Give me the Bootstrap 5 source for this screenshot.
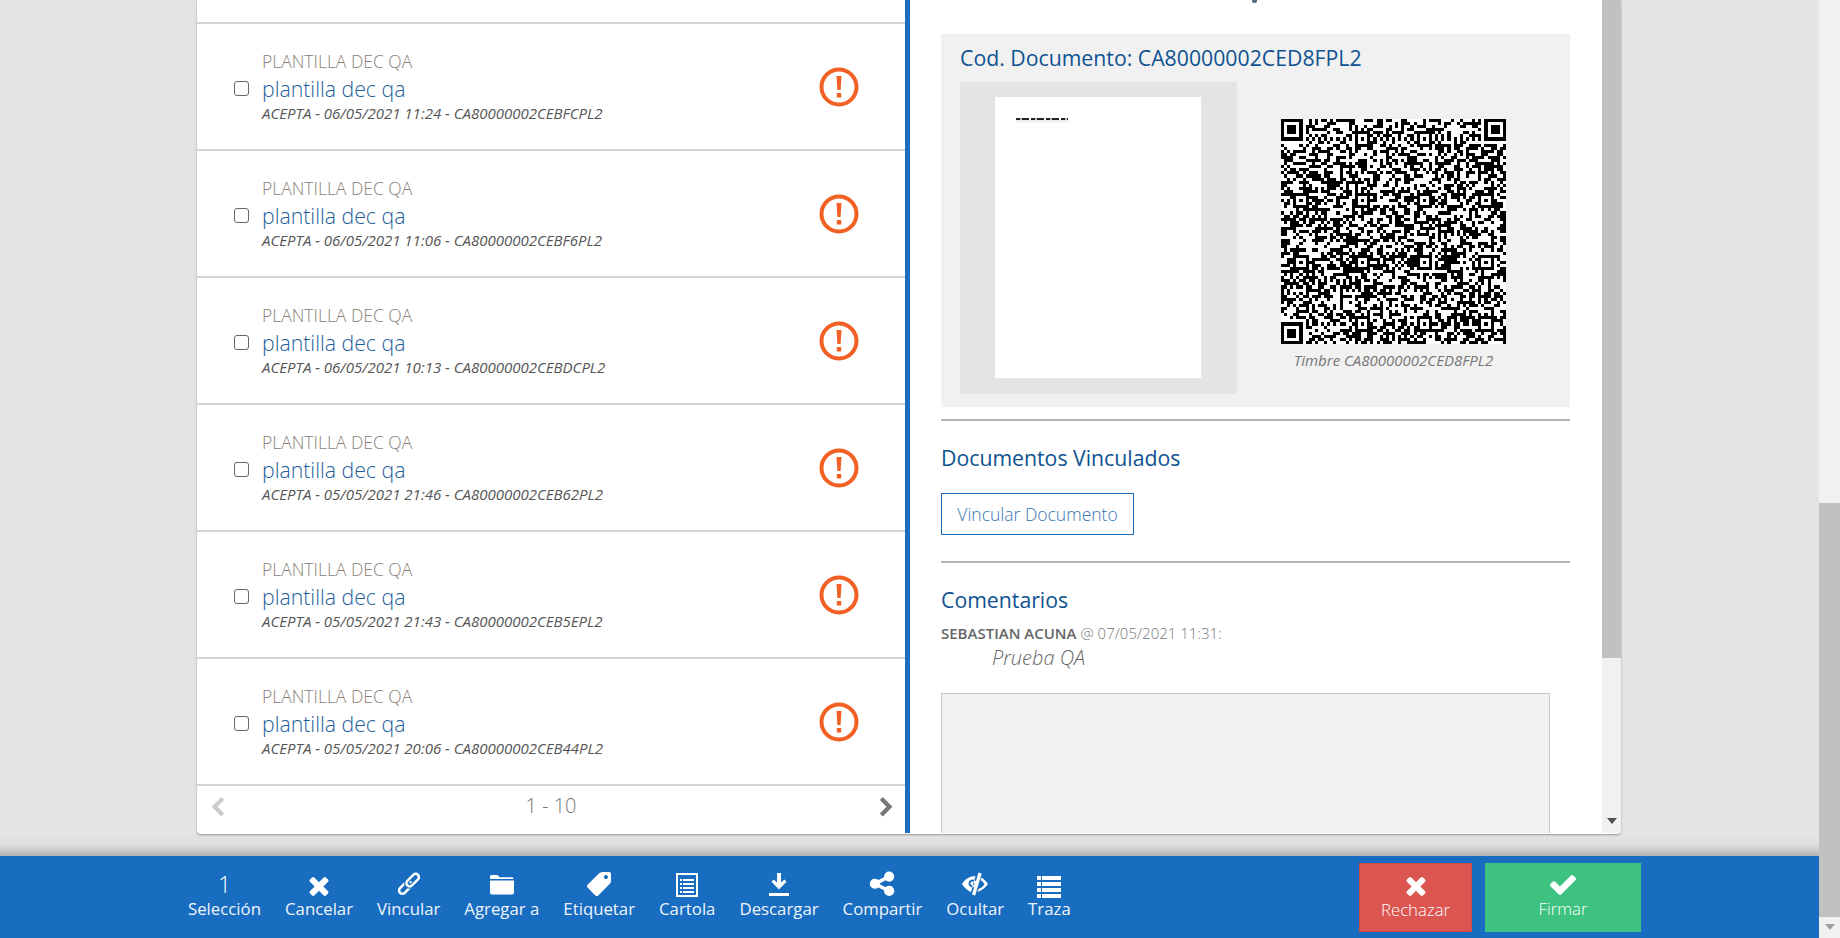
<!DOCTYPE html>
<html lang="es">
<head>
<meta charset="UTF-8" />
<title>Documentos</title>
<link href="https://cdn.jsdelivr.net/npm/bootstrap@5.3.2/dist/css/bootstrap.min.css" rel="stylesheet" />
<style>
  html, body { height: 938px; overflow: hidden; }
  body { font-family: "Open Sans", "Liberation Sans", sans-serif; background: #e4e4e4; color: #666; font-weight: 300; }
  svg { display: block; fill: currentColor; overflow: visible; }

  .page-main { width: 1819px; height: 938px; }
  .page-content { height: 856px; padding-left: 197px; background: linear-gradient(#e4e4e4 834px, #dedede 845px, #b4b4b4 856px); }
  .page-bar { width: 21px; height: 938px; background: #f1f1f1; }
  .page-thumb { height: 414px; margin-top: 503px; background: #c1c1c1; }
  .arrow-down { width: 0; height: 0; border-left: 5px solid transparent; border-right: 5px solid transparent; border-top: 6px solid #a0a0a0; }
  .page-bar .arrow-down { margin: 7px auto 0; }

  .doc-card { width: 1424px; height: 834px; background: #fff; box-shadow: 0 1px 2px rgba(0,0,0,.35); border-radius: 0 0 4px 4px; overflow: hidden; }
  .doc-list { width: 708px; }
  .list-stub { height: 24px; border-bottom: 2px solid #d4d4d4; }
  .doc-row { height: 127px; border-bottom: 2px solid #d4d4d4; padding-left: 37px; padding-right: 46px; }
  .doc-check { width: 15px; height: 15px; border: 1.5px solid #666; border-radius: 3px; margin-top: 4px; margin-right: 13px; flex: none; }
  .row-kicker { font-size: 17.5px; line-height: 25px; color: #8a8078; }
  .row-title { font-size: 21.25px; line-height: 30px; color: #1d6099; }
  .row-meta { font-size: 15px; line-height: 19px; margin-bottom: 2px; font-style: italic; font-weight: 400; color: #555; }
  .alert-mark { width: 40px; height: 40px; color: #f26024; }
  .pager { height: 47px; padding: 0 8px 8px 10px; color: #777; font-size: 20px; }
  .pager svg { width: 21px; height: 21px; margin-top: 3px; }
  .pager span { margin-right: 2px; }
  .pager-off { color: #ccc; }

  .doc-split { width: 5px; height: 833px; background: #1a6dc0; }
  .doc-detail { width: 692px; height: 833px; padding: 0 32px 0 31px; overflow: hidden; }
  .cut-heading { height: 34px; padding-left: 311px; }
  .cut-tail { width: 5px; height: 3px; background: #5a6a80; border-radius: 0 0 2px 2px; }
  .stamp-box { height: 373px; padding: 0 19px; background: #f1f1f1; }
  .sec-title { font-size: 21.25px; line-height: 28px; font-weight: 400; color: #0e5291; margin: 0; }
  .stamp-box .sec-title { padding-top: 10px; height: 48px; }
  .thumb-wrap { width: 277px; height: 312px; padding: 15px 35px; background: #e4e4e4; }
  .thumb-page { width: 206px; height: 281px; background: #fff; padding: 21px 21px; }
  .thumb-text { width: 52px; height: 2px; background: repeating-linear-gradient(90deg, #222 0 4px, #bbb 4px 6px, #222 6px 13px, #fff 13px 15px); box-shadow: 0 2px 2px #e6e6e6; filter: blur(.4px); }
  .qr-wrap { margin-left: 44px; padding-top: 37px; width: 225px; }
  .qr-wrap svg { width: 225px; height: 225px; }
  .qr-note { font-size: 15px; line-height: 20px; font-style: italic; font-weight: 400; color: #777; text-align: center; margin-top: 6px; white-space: nowrap; }
  .sec-rule { height: 2px; background: #b4b4b4; margin: 12px 0 0; opacity: 1; border: 0; }
  .title-linked { margin-top: 23px; }
  .link-doc { width: 193px; height: 42px; margin-top: 21px; border: 1.5px solid #1a6dc0; border-radius: 0; color: #3a74b0; font-size: 17.5px; font-weight: 300; padding: 0; line-height: 38px; background: #fff; }
  .rule-second { margin-top: 26px; }
  .title-comments { margin-top: 23px; }
  .comment-head { font-size: 15px; line-height: 20px; color: #777; margin-top: 9px; }
  .comment-head b { font-weight: 600; color: #666; }
  .comment-text { font-size: 20px; line-height: 28px; font-style: italic; padding-left: 51px; color: #666; margin-top: 1px; }
  .comment-box { width: 609px; height: 170px; background: #f1f1f1; border: 1px solid #c8c8c8; margin-top: 21px; }
  .detail-bar { width: 19px; height: 833px; background: #f1f1f1; }
  .detail-thumb { height: 658px; background: #c1c1c1; }
  .detail-bar .arrow-down { margin: 160px auto 0; border-top-color: #505050; }

  .action-bar { height: 82px; background: #196dc0; padding: 0 178px 0 176px; color: #fff; }
  .action-item { padding: 0 12px; text-align: center; height: 82px; font-size: 16.8px; font-weight: 400; line-height: 22px; color: #eef4fb; white-space: nowrap; }
  .action-icon { height: 42px; padding-top: 14px; display: flex; justify-content: center; color: #fff; }
  .action-icon svg { height: 26px; width: 26px; }
  .action-num { font-size: 23px; font-weight: 300; line-height: 28px; }
  .action-btn { height: 69px; margin-top: 7px; text-align: center; font-size: 16.8px; line-height: 22px; color: #fff; }
  .action-btn .action-icon { height: 35px; padding-top: 6px; }
  .btn-reject { width: 113px; background: #dc5550; border: 1px solid #cf4a46; }
  .btn-sign { width: 156px; background: #3dc37f; margin-left: 13px; }
</style>
</head>
<body class="d-flex">
  <div class="page-main">
    <div class="page-content">
      <div class="doc-card d-flex">
        <!-- lista de documentos -->
        <div class="doc-list d-flex flex-column">
          <div class="list-stub"></div>
          <div id="rows"></div>
          <div class="pager d-flex align-items-center justify-content-between">
            <svg class="pager-off" viewBox="0 0 1792 1792"><path d="M1427 301l-531 531 531 531q19 19 19 45t-19 45l-166 166q-19 19-45 19t-45-19l-742-742q-19-19-19-45t19-45l742-742q19-19 45-19t45 19l166 166q19 19 19 45t-19 45z"/></svg>
            <span>1 - 10</span>
            <svg viewBox="0 0 1792 1792"><path d="M1363 877l-742 742q-19 19-45 19t-45-19l-166-166q-19-19-19-45t19-45l531-531-531-531q-19-19-19-45t19-45l166-166q19-19 45-19t45 19l742 742q19 19 19 45t-19 45z"/></svg>
          </div>
        </div>
        <div class="doc-split"></div>
        <!-- detalle -->
        <div class="doc-detail">
          <div class="cut-heading"><div class="cut-tail"></div></div>
          <div class="stamp-box">
            <h5 class="sec-title">Cod. Documento: CA80000002CED8FPL2</h5>
            <div class="d-flex">
              <div class="thumb-wrap"><div class="thumb-page"><div class="thumb-text"></div></div></div>
              <div class="qr-wrap">
                <svg id="qr" viewBox="0 0 73 73" shape-rendering="crispEdges"></svg>
                <div class="qr-note">Timbre CA80000002CED8FPL2</div>
              </div>
            </div>
          </div>
          <hr class="sec-rule">
          <h5 class="sec-title title-linked">Documentos Vinculados</h5>
          <button class="btn link-doc d-block">Vincular Documento</button>
          <hr class="sec-rule rule-second">
          <h5 class="sec-title title-comments">Comentarios</h5>
          <div class="comment-head"><b>SEBASTIAN ACUNA</b> @ 07/05/2021 11:31:</div>
          <div class="comment-text">Prueba QA</div>
          <div class="comment-box"></div>
        </div>
        <div class="detail-bar">
          <div class="detail-thumb"></div>
          <div class="arrow-down"></div>
        </div>
      </div>
    </div>

    <div class="action-bar d-flex">
      <div class="action-item"><div class="action-icon"><span class="action-num">1</span></div>Selección</div>
      <div class="action-item"><div class="action-icon"><svg viewBox="84 -71 1625 1625"><path d="M1490 1322q0 40-28 68l-136 136q-28 28-68 28t-68-28l-294-294-294 294q-28 28-68 28t-68-28l-136-136q-28-28-28-68t28-68l294-294-294-294q-28-28-28-68t28-68l136-136q28-28 68-28t68 28l294 294 294-294q28-28 68-28t68 28l136 136q28 28 28 68t-28 68l-294 294 294 294q28 28 28 68z"/></svg></div>Cancelar</div>
      <div class="action-item"><div class="action-icon"><svg viewBox="0 0 26 26"><g transform="rotate(-45 13 13.800)" fill="none" stroke-width="2.500"><rect stroke="currentColor" x="0.300" y="10.500" width="15" height="6.600" rx="3.300"/><rect stroke="#196dc0" stroke-width="4.800" x="10.700" y="10.500" width="15" height="6.600" rx="3.300"/><rect stroke="currentColor" x="10.700" y="10.500" width="15" height="6.600" rx="3.300"/></g></svg></div>Vincular</div>
      <div class="action-item"><div class="action-icon"><svg viewBox="0 -2 26 26"><path d="M1 4.500q0-1.500 1.500-1.500h6l2 2.200h12q2 0 2 1.300v.5H1zM1 8.500h24v12q0 2-2 2H3q-2 0-2-2z"/></svg></div>Agregar a</div>
      <div class="action-item"><div class="action-icon"><svg viewBox="86 3 1640 1640"><path transform="matrix(-1 0 0 1 1792 0)" d="M576 448q0-53-37.500-90.500t-90.500-37.500-90.500 37.500-37.500 90.500 37.500 90.500 90.500 37.500 90.500-37.500 37.500-90.500zm1067 576q0 53-37 90l-491 492q-39 37-91 37-53 0-90-37l-715-716q-38-37-64.500-101t-26.500-117v-416q0-52 38-90t90-38h416q53 0 117 26.500t102 64.500l715 714q37 39 37 91z"/></svg></div>Etiquetar</div>
      <div class="action-item"><div class="action-icon"><svg viewBox="0 -2 26 26"><path fill-rule="evenodd" d="M2 1h22v24H2zM4 3v20h18V3z"/><path d="M6 7h2v2H6zM9 7h11v2H9zM6 11h2v2H6zM9 11h11v2H9zM6 15h2v2H6zM9 15h11v2H9zM6 19h2v2H6zM9 19h11v2H9z"/></svg></div>Cartola</div>
      <div class="action-item"><div class="action-icon"><svg viewBox="0 0 26 26"><path d="M11 3h4v9.500l3.500-3 2 2.200-7.500 7.800-7.500-7.800 2-2.200 3.500 3zM3 23h20v3H3z"/></svg></div>Descargar</div>
      <div class="action-item"><div class="action-icon"><svg viewBox="81 34 1630 1630"><path d="M1344 1024q133 0 226.500 93.500t93.500 226.500-93.500 226.500-226.500 93.500-226.500-93.500-93.500-226.500q0-12 2-34l-360-180q-92 86-218 86-133 0-226.500-93.500t-93.500-226.500 93.500-226.500 226.500-93.500q126 0 218 86l360-180q-2-22-2-34 0-133 93.500-226.500t226.500-93.500 226.500 93.500 93.500 226.500-93.500 226.500-226.500 93.500q-126 0-218-86l-360 180q2 22 2 34t-2 34l360 180q92-86 218-86z"/></svg></div>Compartir</div>
      <div class="action-item"><div class="action-icon"><svg viewBox="0 0 26 26"><path fill-rule="evenodd" d="M0 14C3 9 8 6 13.500 6L9 22C5.500 20.500 2.500 18 0 14zM10.500 9.500a4 4 0 1 0 .1 0zM10.500 11.500a2 2 0 1 1-.1 0z"/><path d="M16.500 2.500l3.200 1-6.500 22-3.200-1z"/><path d="M19.500 7.500C22 9 24.500 11.500 26 14c-2.500 3.500-6 6.500-10.500 8l1-3c3-1 5-3 6-5-1-1.500-2.500-3-4-4z"/></svg></div>Ocultar</div>
      <div class="action-item"><div class="action-icon"><svg viewBox="0 -4 26 26"><path d="M1 2h4v4H1zM6 2h19v4H6zM1 8h4v4H1zM6 8h19v4H6zM1 14h4v4H1zM6 14h19v4H6zM1 20h4v4H1zM6 20h19v4H6z"/></svg></div>Traza</div>
      <div class="flex-grow-1"></div>
      <div class="action-btn btn-reject"><div class="action-icon"><svg viewBox="84 -71 1625 1625"><path d="M1490 1322q0 40-28 68l-136 136q-28 28-68 28t-68-28l-294-294-294 294q-28 28-68 28t-68-28l-136-136q-28-28-28-68t28-68l294-294-294-294q-28-28-28-68t28-68l136-136q28-28 68-28t68 28l294 294 294-294q28-28 68-28t68 28l136 136q28 28 28 68t-28 68l-294 294 294 294q28 28 28 68z"/></svg></div>Rechazar</div>
      <div class="action-btn btn-sign"><div class="action-icon"><svg viewBox="121 -28 1550 1550"><path d="M1671 566q0 40-28 68l-724 724-136 136q-28 28-68 28t-68-28l-136-136-362-362q-28-28-28-68t28-68l136-136q28-28 68-28t68 28l294 295 656-657q28-28 68-28t68 28l136 136q28 28 28 68z"/></svg></div>Firmar</div>
    </div>
  </div>
  <div class="page-bar">
    <div class="page-thumb"></div>
    <div class="arrow-down"></div>
  </div>

<script>
  const docs = [
    "ACEPTA - 06/05/2021 11:24 - CA80000002CEBFCPL2",
    "ACEPTA - 06/05/2021 11:06 - CA80000002CEBF6PL2",
    "ACEPTA - 06/05/2021 10:13 - CA80000002CEBDCPL2",
    "ACEPTA - 05/05/2021 21:46 - CA80000002CEB62PL2",
    "ACEPTA - 05/05/2021 21:43 - CA80000002CEB5EPL2",
    "ACEPTA - 05/05/2021 20:06 - CA80000002CEB44PL2"
  ];
  document.getElementById("rows").innerHTML = docs.map(meta => `
    <div class="doc-row d-flex align-items-center">
      <span class="doc-check"></span>
      <div class="flex-grow-1">
        <div class="row-kicker">PLANTILLA DEC QA</div>
        <div class="row-title">plantilla dec qa</div>
        <div class="row-meta">${meta}</div>
      </div>
      <svg class="alert-mark" viewBox="0 0 40 40"><circle cx="20" cy="20" r="17.500" fill="none" stroke="currentColor" stroke-width="4"/><path d="M17.500 9h5l-.9 14h-3.200zM17.800 26h4.400v4.400h-4.400z"/></svg>
    </div>`).join("");

  // QR del timbre: version 14 (73 modulos), patrones fijos y relleno pseudoaleatorio
  const n = 73, grid = [];
  let seed = 20210507;
  const rnd = () => (seed = (seed * 1664525 + 1013904223) >>> 0) / 4294967296;
  for (let y = 0; y < n; y++) { grid.push([]); for (let x = 0; x < n; x++) grid[y].push(rnd() > 0.5); }
  function finder(cx, cy) {
    for (let y = -4; y <= 4; y++) for (let x = -4; x <= 4; x++) {
      if (!grid[cy + y] || grid[cy + y][cx + x] === undefined) continue;
      const d = Math.max(Math.abs(x), Math.abs(y));
      grid[cy + y][cx + x] = d !== 2 && d !== 4;
    }
  }
  function align(cx, cy) {
    for (let y = -2; y <= 2; y++) for (let x = -2; x <= 2; x++) {
      grid[cy + y][cx + x] = Math.max(Math.abs(x), Math.abs(y)) !== 1;
    }
  }
  for (let i = 0; i < n; i++) { grid[6][i] = i % 2 === 0; grid[i][6] = i % 2 === 0; }
  [6, 26, 46, 66].forEach(a => [6, 26, 46, 66].forEach(b => {
    if (!((a === 6 && b === 6) || (a === 6 && b === 66) || (a === 66 && b === 6))) align(a, b);
  }));
  finder(3, 3); finder(69, 3); finder(3, 69);
  let d = "";
  grid.forEach((row, y) => row.forEach((on, x) => { if (on) d += `M${x} ${y}h1v1h-1z`; }));
  document.getElementById("qr").innerHTML = `<rect width="73" height="73" fill="#fff"/><path fill="#000" d="${d}"/>`;
</script>
<script src="https://cdn.jsdelivr.net/npm/bootstrap@5.3.2/dist/js/bootstrap.bundle.min.js"></script>
</body>
</html>
